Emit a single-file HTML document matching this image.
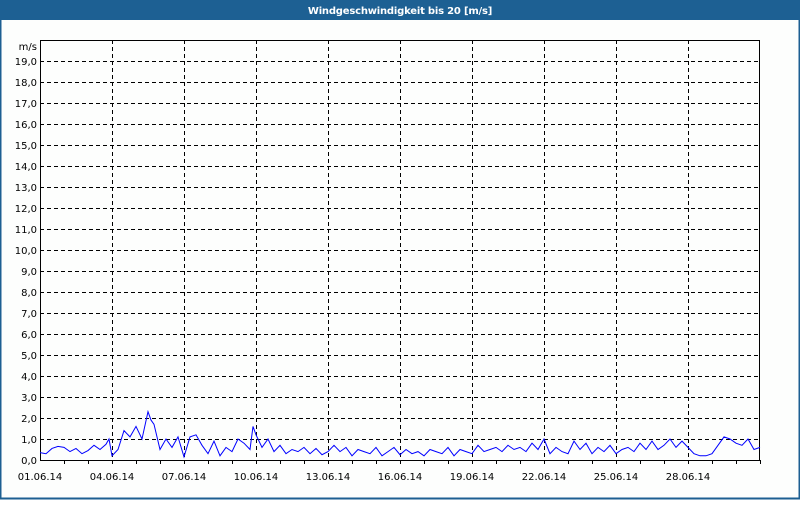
<!DOCTYPE html>
<html><head><meta charset="utf-8"><style>
html,body{margin:0;padding:0;background:#fff;}
body{width:800px;height:500px;overflow:hidden;}
</style></head><body>
<svg width="800" height="500" xmlns="http://www.w3.org/2000/svg" font-family="DejaVu Sans, Liberation Sans, sans-serif" font-size="10">
<rect x="0" y="0" width="800" height="500" fill="#fdfefd"/>
<rect x="0.5" y="0.5" width="799" height="498" fill="none" stroke="#1d5f92" stroke-width="2"/>
<rect x="0" y="0" width="800" height="20" fill="#1d6093"/>
<text x="400" y="14" fill="#fff" font-weight="bold" text-anchor="middle" font-size="10" letter-spacing="-0.2">Windgeschwindigkeit bis 20 [m/s]</text>
<g stroke="#000" stroke-width="1" stroke-dasharray="4,3" shape-rendering="crispEdges">
<path d="M40 61.5H760M40 82.5H760M40 103.5H760M40 124.5H760M40 145.5H760M40 166.5H760M40 187.5H760M40 208.5H760M40 229.5H760M40 250.5H760M40 271.5H760M40 292.5H760M40 313.5H760M40 334.5H760M40 355.5H760M40 376.5H760M40 397.5H760M40 418.5H760M40 439.5H760"/>
<path d="M112.5 40V460M184.5 40V460M256.5 40V460M328.5 40V460M400.5 40V460M472.5 40V460M544.5 40V460M616.5 40V460M688.5 40V460"/>
</g>
<g stroke="#000" stroke-width="1" shape-rendering="crispEdges" fill="none">
<rect x="40.5" y="40.5" width="719" height="420"/>
<path d="M64.5 460v4M88.5 460v4M112.5 460v4M136.5 460v4M160.5 460v4M184.5 460v4M208.5 460v4M232.5 460v4M256.5 460v4M280.5 460v4M304.5 460v4M328.5 460v4M352.5 460v4M376.5 460v4M400.5 460v4M424.5 460v4M448.5 460v4M472.5 460v4M496.5 460v4M520.5 460v4M544.5 460v4M568.5 460v4M592.5 460v4M616.5 460v4M640.5 460v4M664.5 460v4M688.5 460v4M712.5 460v4M736.5 460v4M760.5 460v4"/>
</g>
<g transform="translate(0,460) scale(1,-21)">
<polyline fill="none" stroke="#0000ff" stroke-width="1" vector-effect="non-scaling-stroke" points="40,.35 46,.3 52,.55 58,.65 64,.6 70,.4 76,.55 82,.3 88,.45 94,.7 100,.5 106,.75 109,1 112,.2 118,.5 124,1.4 130,1.1 136,1.6 142,1.0 148,2.3 151,1.9 154,1.7 160,.5 166,1.0 172,.6 178,1.1 184,.15 190,1.1 196,1.2 202,.7 208,.3 214,.9 220,.2 226,.6 232,.4 238,1.0 244,.8 250,.5 253,1.6 256,1.2 262,.6 268,1.0 274,.4 280,.7 286,.3 292,.5 298,.4 304,.6 310,.3 316,.55 322,.25 328,.4 334,.7 340,.4 346,.6 352,.2 358,.5 364,.4 370,.3 376,.6 382,.2 388,.4 394,.6 400,.25 406,.5 412,.3 418,.4 424,.2 430,.5 436,.4 442,.3 448,.6 454,.2 460,.5 466,.4 472,.3 478,.7 484,.4 490,.5 496,.6 502,.4 508,.7 514,.5 520,.6 526,.4 532,.8 538,.5 544,1.0 550,.3 556,.6 562,.4 568,.3 574,.9 580,.5 586,.8 592,.3 598,.6 604,.4 610,.7 616,.3 622,.5 628,.6 634,.4 640,.8 646,.5 652,.9 658,.5 664,.7 670,1.0 676,.6 682,.9 688,.6 694,.3 700,.2 706,.2 712,.3 718,.7 724,1.1 730,1.0 736,.8 742,.7 748,1.0 754,.5 760,.6"/>
</g>
<g fill="#000" text-anchor="end">
<text x="37" y="50">m/s</text>
<text x="37" y="65">19,0</text><text x="37" y="86">18,0</text><text x="37" y="107">17,0</text><text x="37" y="128">16,0</text><text x="37" y="149">15,0</text><text x="37" y="170">14,0</text><text x="37" y="191">13,0</text><text x="37" y="212">12,0</text><text x="37" y="233">11,0</text><text x="37" y="254">10,0</text><text x="37" y="275">9,0</text><text x="37" y="296">8,0</text><text x="37" y="317">7,0</text><text x="37" y="338">6,0</text><text x="37" y="359">5,0</text><text x="37" y="380">4,0</text><text x="37" y="401">3,0</text><text x="37" y="422">2,0</text><text x="37" y="443">1,0</text><text x="37" y="464">0,0</text>
</g>
<g fill="#000" text-anchor="middle">
<text x="40" y="480">01.06.14</text><text x="112" y="480">04.06.14</text><text x="184" y="480">07.06.14</text><text x="256" y="480">10.06.14</text><text x="328" y="480">13.06.14</text><text x="400" y="480">16.06.14</text><text x="472" y="480">19.06.14</text><text x="544" y="480">22.06.14</text><text x="616" y="480">25.06.14</text><text x="688" y="480">28.06.14</text>
</g>
</svg>
</body></html>
